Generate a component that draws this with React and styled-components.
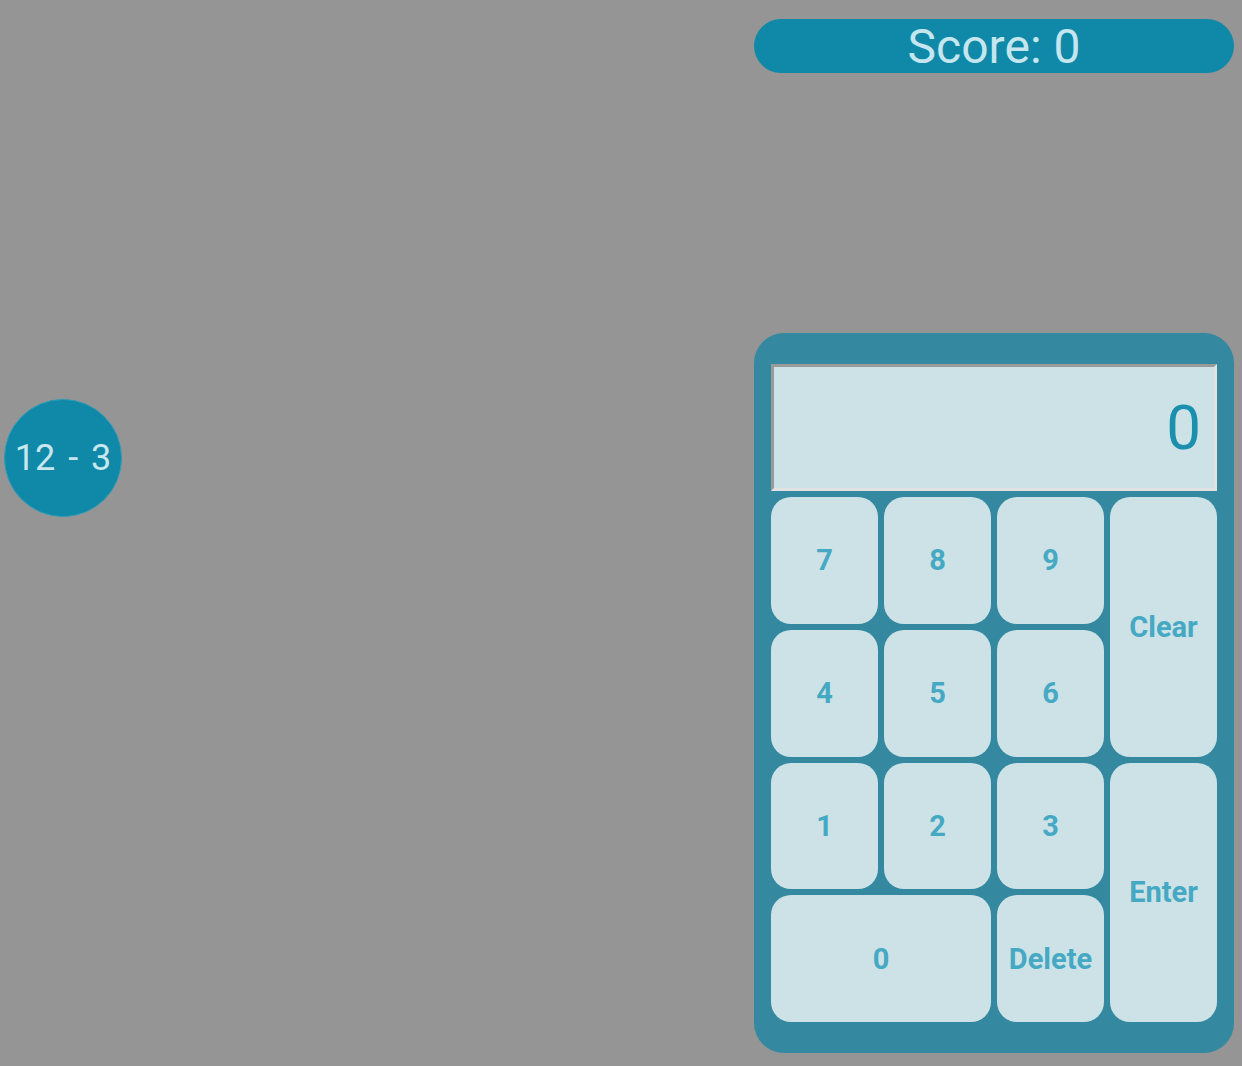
import React from 'react';
import styled, { createGlobalStyle } from 'styled-components';

const GlobalStyle = createGlobalStyle`
  html, body {
    margin: 0;
    padding: 0;
    background: #959595;
    font-family: Roboto, "Noto Sans", sans-serif;
  }
`;

const Page = styled.div`
  display: flex;
  height: 1066px;
  overflow: hidden;
`;

const GameArea = styled.div`
  position: relative;
  flex: 1;
`;

const Problem = styled.div`
  position: absolute;
  left: ${p => p.x}px;
  top: ${p => p.y}px;
  width: 116px;
  height: 116px;
  border-radius: 50%;
  border: 1px solid #2a9cb8;
  background: #1088a8;
  color: #c8e6ee;
  font-size: 36px;
  word-spacing: 4px;
  display: flex;
  align-items: center;
  justify-content: center;
`;

const Side = styled.div`
  width: 480px;
  margin-right: 8px;
  padding-top: 19px;
  display: flex;
  flex-direction: column;
`;

const Score = styled.div`
  height: 54px;
  box-sizing: border-box;
  padding-top: 2px;
  border-radius: 27px;
  background: #1088a8;
  color: #c5e6ee;
  font-size: 48px;
  line-height: 52px;
  text-align: center;
`;

const Calculator = styled.div`
  margin-top: 260px;
  height: 720px;
  box-sizing: border-box;
  padding: 31px 17px;
  border-radius: 30px;
  background: #3489a0;
  display: flex;
  flex-direction: column;
  gap: 6px;
`;

const Display = styled.div`
  height: 127px;
  box-sizing: border-box;
  border-style: solid;
  border-width: 3px;
  border-color: #9a9a9a #e2e2e2 #e2e2e2 #9a9a9a;
  background: #cde2e7;
  color: #1a8fae;
  font-size: 62px;
  display: flex;
  align-items: center;
  justify-content: flex-end;
  padding-right: 13px;
`;

const Keys = styled.div`
  flex: 1;
  display: grid;
  grid-template-columns: repeat(4, 1fr);
  grid-template-rows: repeat(4, 1fr);
  gap: 6px;
`;

const Key = styled.button`
  grid-column: ${p => p.col || 'auto'};
  grid-row: ${p => p.row || 'auto'};
  border: none;
  border-radius: 20px;
  background: #cde2e7;
  color: #46a9c3;
  font-family: Roboto, "Noto Sans", sans-serif;
  font-weight: 700;
  font-size: 29px;
  padding: 0;
  cursor: pointer;
`;

export default function App() {
  return (
    <Page>
      <GlobalStyle />
      <GameArea>
        <Problem x={4} y={399}>12 - 3</Problem>
      </GameArea>
      <Side>
        <Score>Score: 0</Score>
        <Calculator>
          <Display>0</Display>
          <Keys>
            <Key col="1" row="1">7</Key>
            <Key col="2" row="1">8</Key>
            <Key col="3" row="1">9</Key>
            <Key col="4" row="1 / span 2">Clear</Key>
            <Key col="1" row="2">4</Key>
            <Key col="2" row="2">5</Key>
            <Key col="3" row="2">6</Key>
            <Key col="1" row="3">1</Key>
            <Key col="2" row="3">2</Key>
            <Key col="3" row="3">3</Key>
            <Key col="4" row="3 / span 2">Enter</Key>
            <Key col="1 / span 2" row="4">0</Key>
            <Key col="3" row="4">Delete</Key>
          </Keys>
        </Calculator>
      </Side>
    </Page>
  );
}
